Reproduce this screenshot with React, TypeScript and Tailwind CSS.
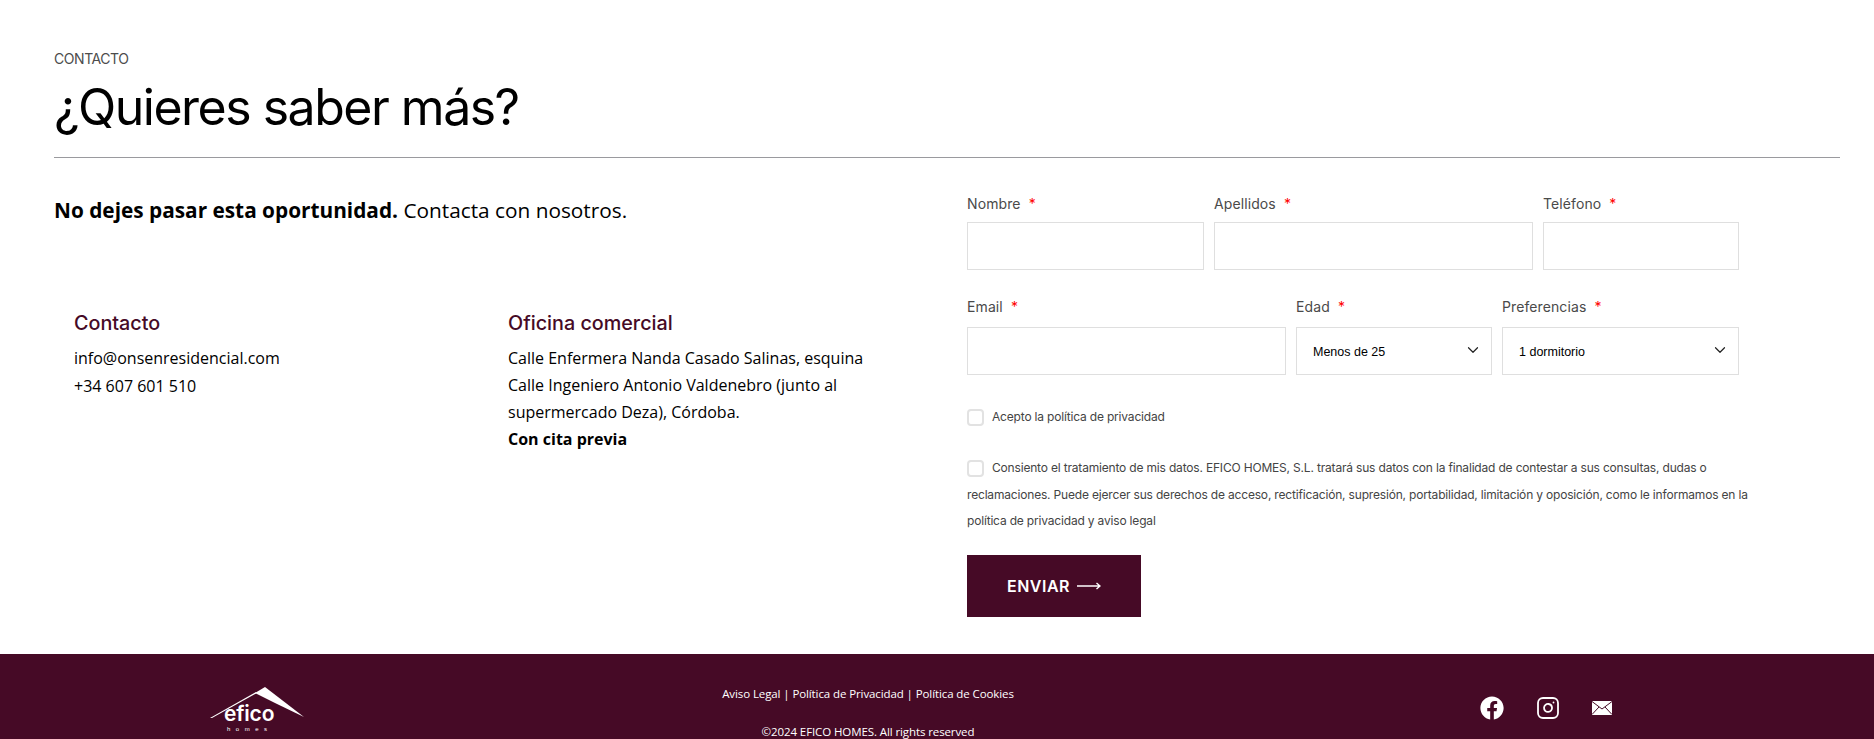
import { FaFacebook } from "react-icons/fa"
import { ChevronDown, Instagram } from "lucide-react"

const body = { fontFamily: '"Open Sans", sans-serif' }

const Label = ({ text, tall }: { text: string; tall?: boolean }) => (
  <label className={`block ${tall ? "h-[32px]" : "h-[30px]"} font-['Inter',sans-serif] text-[14px] leading-[20px] pt-[2px] tracking-[0.1px] text-[#4a4a4a]`}>
    {text} <span className="text-[#ff0000] ml-[4px]">*</span>
  </label>
)

const Field = ({ label, className, tall }: { label: string; className: string; tall?: boolean }) => (
  <div className={className}>
    <Label text={label} tall={tall} />
    <input type="text" className="block w-full h-[48px] border border-[#dfdfdf] bg-white" />
  </div>
)

const SelectField = ({ label, value, className }: { label: string; value: string; className: string }) => (
  <div className={className}>
    <Label text={label} tall />
    <div className="relative">
      <select defaultValue={value} className="block w-full h-[48px] appearance-none border border-[#dfdfdf] bg-white text-[12.5px] text-black font-['Liberation_Sans',sans-serif] pl-[16px] pt-[2px]">
        <option>{value}</option>
      </select>
      <ChevronDown className="absolute right-[10px] top-[14px] w-[18px] h-[18px] text-[#222] pointer-events-none" strokeWidth={1.6} />
    </div>
  </div>
)

const Checkbox = () => (
  <span className="inline-block align-middle w-[17px] h-[17px] rounded-[4px] border-2 border-[#e2e2e2] bg-white mr-[8px]" />
)

export default function App() {
  return (
    <div className="w-full h-[739px] overflow-hidden bg-white flex flex-col">
      {/* Cabecera */}
      <section className="flex-1 px-[54px] pt-[50px]">
        <p className="font-['Inter',sans-serif] text-[14px] leading-[18px] tracking-[-0.45px] text-[#4c4c4c]">CONTACTO</p>
        <h1 className="font-['Inter',sans-serif] text-[50px] leading-[58px] mt-[10px] tracking-[-1.5px] text-black">¿Quieres saber más?</h1>
        <div className="h-px bg-[#9a9a9e] mt-[21px] w-[1786px]" />

        <div className="flex mt-[34px]">
          {/* Columna izquierda */}
          <div className="w-[913px] shrink-0" style={body}>
            <p className="text-[20.8px] leading-[28px] mt-[4px] text-black">
              <strong className="font-bold">No dejes pasar esta oportunidad.</strong> Contacta con nosotros.
            </p>
            <div className="flex mt-[87px] pl-[20px]">
              <div className="w-[434px]">
                <h3 className="font-['Inter',sans-serif] text-[19.75px] leading-[24px] font-medium text-[#460a26]">Contacto</h3>
                <p className="text-[16px] leading-[27.5px] mt-[10px] text-black">
                  info@onsenresidencial.com
                  <br />
                  +34 607 601 510
                </p>
              </div>
              <div className="w-[380px]">
                <h3 className="font-['Inter',sans-serif] text-[19.75px] leading-[24px] font-medium text-[#460a26]">Oficina comercial</h3>
                <p className="text-[16px] leading-[27px] mt-[10px] text-black">
                  Calle Enfermera Nanda Casado Salinas, esquina
                  <br />
                  Calle Ingeniero Antonio Valdenebro (junto al
                  <br />
                  supermercado Deza), Córdoba.
                  <br />
                  <strong className="font-bold">Con cita previa</strong>
                </p>
              </div>
            </div>
          </div>

          {/* Formulario */}
          <form className="w-[790px]">
            <div className="flex gap-[10px] w-[772px]">
              <Field label="Nombre" className="w-[237px]" />
              <Field label="Apellidos" className="w-[319px]" />
              <Field label="Teléfono" className="w-[196px]" />
            </div>
            <div className="flex gap-[10px] w-[772px] mt-[25px]">
              <Field label="Email" className="w-[319px]" tall />
              <SelectField label="Edad" value="Menos de 25" className="w-[196px]" />
              <SelectField label="Preferencias" value="1 dormitorio" className="w-[237px]" />
            </div>
            <p className="mt-[29px] text-[12px] leading-[26px] text-[#444] font-['Inter',sans-serif] tracking-[-0.18px]">
              <Checkbox />
              Acepto la política de privacidad
            </p>
            <p className="mt-[25px] w-[790px] text-[12px] leading-[26.5px] text-[#444] font-['Inter',sans-serif] tracking-[-0.18px]">
              <Checkbox />
              Consiento el tratamiento de mis datos. EFICO HOMES, S.L. tratará sus datos con la finalidad de contestar a sus consultas, dudas o reclamaciones. Puede ejercer sus derechos de acceso, rectificación, supresión, portabilidad, limitación y oposición, como le informamos en la política de privacidad y aviso legal
            </p>
            <button type="button" className="mt-[20px] w-[174px] h-[62px] bg-[#460a26] text-white text-[16px] font-semibold font-['Inter',sans-serif] tracking-[0.5px] flex items-center justify-center gap-[7px]">
              ENVIAR
              <svg viewBox="0 0 24 8" className="w-[24px] h-[8px]" fill="none" stroke="white" strokeWidth="1.4">
                <path d="M0 4h23M19.5 1 23 4l-3.5 3" />
              </svg>
            </button>
          </form>
        </div>
      </section>

      {/* Footer */}
      <footer className="h-[85px] shrink-0 bg-[#460a26] flex text-white">
        <div className="w-[514px] pt-[33px] flex justify-center">
          <div className="relative w-[96px] h-[44px]">
            <svg viewBox="0 0 96 44" className="absolute inset-0 w-full h-full" fill="white">
              <path d="M1 31 L47 5 L48 6 L3 31 Z" />
              <path d="M46 6 L56 0 L95 30 L66 16 Z" />
            </svg>
            <span className="absolute left-[15px] top-[15px] font-['Inter',sans-serif] font-semibold text-[21px] leading-[24px] tracking-[-0.2px]">efico</span>
            <span className="absolute left-[18px] top-[39px] text-[6px] leading-[7px] tracking-[5.5px] font-['Liberation_Sans',sans-serif]">homes</span>
          </div>
        </div>
        <div className="w-[708px] text-center text-[11.5px] tracking-[-0.1px] font-['Open_Sans',sans-serif] pt-[32px] leading-[16px]">
          <p>Aviso Legal | Política de Privacidad | Política de Cookies</p>
          <p className="mt-[22px]">©2024 EFICO HOMES. All rights reserved</p>
        </div>
        <div className="flex gap-[32px] pl-[258px] pt-[33px] items-start">
          <FaFacebook className="w-[24px] h-[24px] mt-[9px]" />
          <Instagram className="w-[24px] h-[24px] mt-[9px]" strokeWidth={1.8} />
          <svg viewBox="0 0 20 14" className="w-[20px] h-[14px] mt-[14px]" fill="white">
            <path d="M0 0h20v14H0z" />
            <path d="M0 .5 10 8 20 .5M0 13.5 7 6M20 13.5 13 6" fill="none" stroke="#460a26" strokeWidth="1" />
          </svg>
        </div>
      </footer>
    </div>
  )
}
